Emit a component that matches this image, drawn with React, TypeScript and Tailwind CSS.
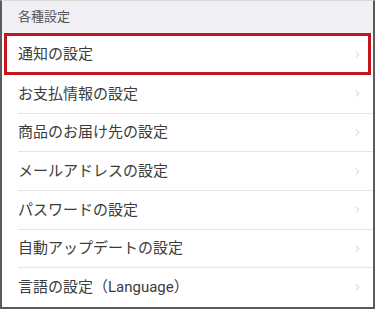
import { ChevronRight } from "lucide-react"

const items = [
  "お支払情報の設定",
  "商品のお届け先の設定",
  "メールアドレスの設定",
  "パスワードの設定",
  "自動アップデートの設定",
  "言語の設定（Language）",
]

function Row({ label, divider = true }: { label: string; divider?: boolean }) {
  return (
    <div className="flex h-[39px] items-center pl-4">
      <div
        className={`flex h-full flex-1 items-center justify-between pr-[10px] ${
          divider ? "border-b border-[#e6e6e6]" : ""
        }`}
      >
        <span className="text-[15px] text-[#3c3c3c]">{label}</span>
        <ChevronRight className="size-[11px] text-[#bdbdbd]" strokeWidth={1.75} />
      </div>
    </div>
  )
}

export default function App() {
  return (
    <div
      className="flex h-[309px] w-[375px] flex-col overflow-hidden border-x-2 border-b-2 border-t border-x-[#5a5a5a] border-b-[#5a5a5a] border-t-[#d8d8d8] bg-white"
      style={{ fontFamily: 'Roboto, "Noto Sans CJK JP", sans-serif' }}
    >
      <div className="flex h-[32px] shrink-0 items-center bg-[#efeff4] pl-4">
        <span className="text-[13px] text-[#555]">各種設定</span>
      </div>

      <div className="mx-[2px] flex h-[42px] shrink-0 items-center justify-between border-[3px] border-[#c4141e] pl-[11px] pr-[5px]">
        <span className="text-[15px] text-[#3c3c3c]">通知の設定</span>
        <ChevronRight className="size-[11px] text-[#bdbdbd]" strokeWidth={1.75} />
      </div>

      {items.map((label, i) => (
        <Row key={label} label={label} divider={i < items.length - 1} />
      ))}
    </div>
  )
}
